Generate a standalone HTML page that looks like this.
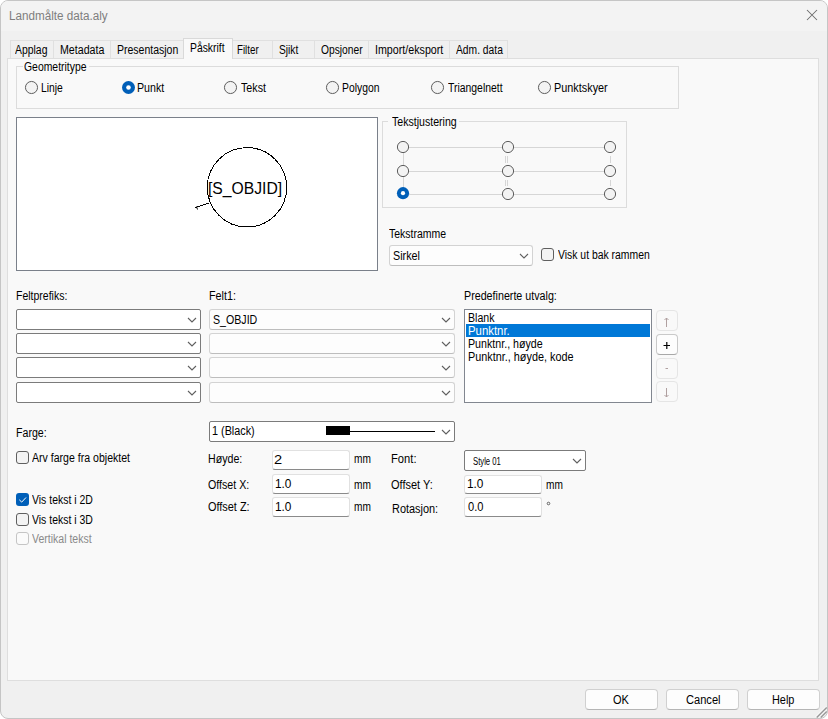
<!DOCTYPE html>
<html><head><meta charset="utf-8"><style>
html,body{margin:0;padding:0;width:828px;height:719px;overflow:hidden;background:#fff}
.ab{position:absolute;box-sizing:content-box}
.tx{position:absolute;white-space:pre;line-height:20px;font-family:"Liberation Sans",sans-serif;transform-origin:0 0;color:#000}
svg{overflow:visible}
</style></head><body>
<div class="ab" style="left:0;top:0;width:826px;height:717px;border:1px solid #c5c5c5;border-radius:8px;background:#f0f0f0;overflow:hidden"><div class="ab" style="left:0;top:0;width:826px;height:30px;background:#f3f3f3"></div></div>
<svg class="ab" style="left:806px;top:9px" width="12" height="12"><path d="M1 1 L11 11 M11 1 L1 11" stroke="#6b6b6b" stroke-width="1.05"/></svg>
<div class="ab" style="left:10px;top:40px;width:42px;height:18px;border:1px solid #e0e0e0;border-bottom:none;background:#f0f0f0"></div>
<div class="ab" style="left:53px;top:40px;width:56px;height:18px;border:1px solid #e0e0e0;border-bottom:none;background:#f0f0f0"></div>
<div class="ab" style="left:110px;top:40px;width:72px;height:18px;border:1px solid #e0e0e0;border-bottom:none;background:#f0f0f0"></div>
<div class="ab" style="left:232px;top:40px;width:39px;height:18px;border:1px solid #e0e0e0;border-bottom:none;background:#f0f0f0"></div>
<div class="ab" style="left:272px;top:40px;width:41px;height:18px;border:1px solid #e0e0e0;border-bottom:none;background:#f0f0f0"></div>
<div class="ab" style="left:314px;top:40px;width:53px;height:18px;border:1px solid #e0e0e0;border-bottom:none;background:#f0f0f0"></div>
<div class="ab" style="left:368px;top:40px;width:80px;height:18px;border:1px solid #e0e0e0;border-bottom:none;background:#f0f0f0"></div>
<div class="ab" style="left:449px;top:40px;width:57px;height:18px;border:1px solid #e0e0e0;border-bottom:none;background:#f0f0f0"></div>
<div class="ab" style="left:7px;top:58px;width:810px;height:621px;border:1px solid #dedede;background:#f9f9f9"></div>
<div class="ab" style="left:183px;top:38px;width:48px;height:20px;border:1px solid #d9d9d9;border-bottom:none;background:#f9f9f9"></div>
<div class="ab" style="left:16px;top:66px;width:661px;height:41px;border:1px solid #dcdcdc"></div>
<div class="ab" style="left:23px;top:60px;width:66px;height:10px;background:#f9f9f9"></div>
<svg class="ab" style="left:24px;top:80px" width="14" height="14"><circle cx="7.5" cy="7.5" r="6.05" fill="#f3f3f3" stroke="#5d5d5d" stroke-width="1"/></svg>
<svg class="ab" style="left:121px;top:80px" width="14" height="14"><circle cx="7.5" cy="7.5" r="6.5" fill="#005fb8"/><circle cx="7.5" cy="7.5" r="2.3" fill="#fff"/></svg>
<svg class="ab" style="left:223px;top:80px" width="14" height="14"><circle cx="7.5" cy="7.5" r="6.05" fill="#f3f3f3" stroke="#5d5d5d" stroke-width="1"/></svg>
<svg class="ab" style="left:325px;top:80px" width="14" height="14"><circle cx="7.5" cy="7.5" r="6.05" fill="#f3f3f3" stroke="#5d5d5d" stroke-width="1"/></svg>
<svg class="ab" style="left:430px;top:80px" width="14" height="14"><circle cx="7.5" cy="7.5" r="6.05" fill="#f3f3f3" stroke="#5d5d5d" stroke-width="1"/></svg>
<svg class="ab" style="left:537px;top:80px" width="14" height="14"><circle cx="7.5" cy="7.5" r="6.05" fill="#f3f3f3" stroke="#5d5d5d" stroke-width="1"/></svg>
<div class="ab" style="left:16px;top:117px;width:360px;height:152px;border:1px solid #7a808a;background:#fff"></div>
<svg class="ab" style="left:0;top:0" width="828" height="300"><circle cx="247" cy="187.3" r="39.7" fill="none" stroke="#000" stroke-width="1" shape-rendering="crispEdges"/><path d="M195.5 207.5 L209 203" stroke="#000" stroke-width="1" fill="none" shape-rendering="crispEdges"/><path d="M196.5 206.5 L197.5 209.5" stroke="#000" stroke-width="1"/></svg>
<div class="tx" style="left:207.5px;top:179px;font-size:16px;line-height:20px;transform:scaleX(0.98)">[S_OBJID]</div>
<div class="ab" style="left:382px;top:121px;width:243px;height:85px;border:1px solid #dcdcdc"></div>
<div class="ab" style="left:388px;top:115px;width:71px;height:10px;background:#f9f9f9"></div>
<svg class="ab" style="left:0;top:0" width="828" height="220"><g stroke="#d6d6d6" stroke-width="1" fill="none"><path d="M403 147.5 H610"/><path d="M403 171.5 H610"/><path d="M403 194.5 H610"/><path d="M403.5 147 V194"/><path d="M505.5 156 V163 M507.5 156 V163 M610.5 156 V163"/><path d="M505.5 180 V186 M507.5 180 V186 M610.5 180 V186"/></g></svg>
<svg class="ab" style="left:396px;top:140px" width="14" height="14"><circle cx="7" cy="7" r="5.6" fill="#f3f3f3" stroke="#5d5d5d" stroke-width="1"/></svg>
<svg class="ab" style="left:501px;top:140px" width="14" height="14"><circle cx="7" cy="7" r="5.6" fill="#f3f3f3" stroke="#5d5d5d" stroke-width="1"/></svg>
<svg class="ab" style="left:603px;top:140px" width="14" height="14"><circle cx="7" cy="7" r="5.6" fill="#f3f3f3" stroke="#5d5d5d" stroke-width="1"/></svg>
<svg class="ab" style="left:396px;top:164px" width="14" height="14"><circle cx="7" cy="7" r="5.6" fill="#f3f3f3" stroke="#5d5d5d" stroke-width="1"/></svg>
<svg class="ab" style="left:501px;top:164px" width="14" height="14"><circle cx="7" cy="7" r="5.6" fill="#f3f3f3" stroke="#5d5d5d" stroke-width="1"/></svg>
<svg class="ab" style="left:603px;top:164px" width="14" height="14"><circle cx="7" cy="7" r="5.6" fill="#f3f3f3" stroke="#5d5d5d" stroke-width="1"/></svg>
<svg class="ab" style="left:396px;top:186px" width="14" height="14"><circle cx="7" cy="7.199999999999989" r="6.1" fill="#005fb8"/><circle cx="7" cy="7.199999999999989" r="2.1" fill="#fff"/></svg>
<svg class="ab" style="left:501px;top:187px" width="14" height="14"><circle cx="7" cy="7" r="5.6" fill="#f3f3f3" stroke="#5d5d5d" stroke-width="1"/></svg>
<svg class="ab" style="left:603px;top:187px" width="14" height="14"><circle cx="7" cy="7" r="5.6" fill="#f3f3f3" stroke="#5d5d5d" stroke-width="1"/></svg>
<div class="ab" style="left:389px;top:245px;width:142px;height:19px;border:1px solid #d3d3d3;border-bottom-color:#bdbdbd;border-radius:3px;background:#fdfdfd"></div><svg class="ab" style="left:519px;top:253px" width="10" height="6"><path d="M1 1 L5 5 L9 1" fill="none" stroke="#5f5f5f" stroke-width="1.1"/></svg>
<svg class="ab" style="left:541px;top:248px" width="14" height="14"><rect x="0.5" y="0.5" width="12" height="12" rx="2.5" fill="#f3f3f3" stroke="#5f5f5f"/></svg>
<div class="ab" style="left:16px;top:309px;width:183px;height:19px;border:1px solid #7b7b7b;border-radius:2px;background:#fff"></div><svg class="ab" style="left:187px;top:317px" width="10" height="6"><path d="M1 1 L5 5 L9 1" fill="none" stroke="#5f5f5f" stroke-width="1.1"/></svg>
<div class="ab" style="left:209px;top:309px;width:244px;height:19px;border:1px solid #d3d3d3;border-bottom-color:#bdbdbd;border-radius:3px;background:#fdfdfd"></div><svg class="ab" style="left:441px;top:317px" width="10" height="6"><path d="M1 1 L5 5 L9 1" fill="none" stroke="#5f5f5f" stroke-width="1.1"/></svg>
<div class="ab" style="left:16px;top:333px;width:183px;height:19px;border:1px solid #7b7b7b;border-radius:2px;background:#fff"></div><svg class="ab" style="left:187px;top:341px" width="10" height="6"><path d="M1 1 L5 5 L9 1" fill="none" stroke="#5f5f5f" stroke-width="1.1"/></svg>
<div class="ab" style="left:209px;top:333px;width:244px;height:19px;border:1px solid #d3d3d3;border-bottom-color:#bdbdbd;border-radius:3px;background:#fdfdfd"></div><svg class="ab" style="left:441px;top:341px" width="10" height="6"><path d="M1 1 L5 5 L9 1" fill="none" stroke="#5f5f5f" stroke-width="1.1"/></svg>
<div class="ab" style="left:16px;top:357px;width:183px;height:19px;border:1px solid #7b7b7b;border-radius:2px;background:#fff"></div><svg class="ab" style="left:187px;top:365px" width="10" height="6"><path d="M1 1 L5 5 L9 1" fill="none" stroke="#5f5f5f" stroke-width="1.1"/></svg>
<div class="ab" style="left:209px;top:357px;width:244px;height:19px;border:1px solid #d3d3d3;border-bottom-color:#bdbdbd;border-radius:3px;background:#fdfdfd"></div><svg class="ab" style="left:441px;top:365px" width="10" height="6"><path d="M1 1 L5 5 L9 1" fill="none" stroke="#5f5f5f" stroke-width="1.1"/></svg>
<div class="ab" style="left:16px;top:382px;width:183px;height:19px;border:1px solid #7b7b7b;border-radius:2px;background:#fff"></div><svg class="ab" style="left:187px;top:390px" width="10" height="6"><path d="M1 1 L5 5 L9 1" fill="none" stroke="#5f5f5f" stroke-width="1.1"/></svg>
<div class="ab" style="left:209px;top:382px;width:244px;height:19px;border:1px solid #d3d3d3;border-bottom-color:#bdbdbd;border-radius:3px;background:#fdfdfd"></div><svg class="ab" style="left:441px;top:390px" width="10" height="6"><path d="M1 1 L5 5 L9 1" fill="none" stroke="#5f5f5f" stroke-width="1.1"/></svg>
<div class="ab" style="left:464px;top:309px;width:186px;height:92px;border:1px solid #828790;background:#fff"></div>
<div class="ab" style="left:466px;top:324px;width:184px;height:13px;background:#0078d7"></div>
<div class="ab" style="left:656px;top:310px;width:20px;height:19px;border:1px solid #e5e5e5;border-bottom-color:#e5e5e5;border-radius:4px;background:#f9f9f9"></div>
<div class="ab" style="left:656px;top:334px;width:20px;height:19px;border:1px solid #c9c9c9;border-bottom-color:#a8a8a8;border-radius:4px;background:#fdfdfd"></div>
<div class="ab" style="left:656px;top:358px;width:20px;height:19px;border:1px solid #e5e5e5;border-bottom-color:#e5e5e5;border-radius:4px;background:#f9f9f9"></div>
<div class="ab" style="left:656px;top:381px;width:20px;height:19px;border:1px solid #e5e5e5;border-bottom-color:#e5e5e5;border-radius:4px;background:#f9f9f9"></div>
<svg class="ab" style="left:656px;top:300px" width="22" height="110"><g stroke="#b0a0a0" stroke-width="1" fill="none"><path d="M10.5 18 V27 M8.5 20 L10.5 18 L12.5 20"/><path d="M10.5 88 V97 M8.5 95 L10.5 97 L12.5 95"/><path d="M9.5 68.5 H12"/></g><path d="M7.5 45.5 H14 M10.8 42 V49" stroke="#000" stroke-width="1.2"/></svg>
<div class="ab" style="left:209px;top:421px;width:244px;height:19px;border:1px solid #7b7b7b;border-radius:2px;background:#fff"></div><svg class="ab" style="left:441px;top:429px" width="10" height="6"><path d="M1 1 L5 5 L9 1" fill="none" stroke="#5f5f5f" stroke-width="1.1"/></svg>
<div class="ab" style="left:326px;top:426px;width:24px;height:9px;background:#000"></div>
<div class="ab" style="left:350px;top:430.5px;width:85px;height:1.5px;background:#000"></div>
<svg class="ab" style="left:16px;top:451px" width="14" height="14"><rect x="0.5" y="0.5" width="12" height="12" rx="2.5" fill="#f3f3f3" stroke="#5f5f5f"/></svg>
<svg class="ab" style="left:16px;top:493px" width="14" height="14"><rect x="0" y="0" width="13" height="13" rx="3" fill="#005fb8"/><path d="M3.3 6.8 L5.7 9.1 L10 4.5" fill="none" stroke="#fff" stroke-width="1"/></svg>
<svg class="ab" style="left:16px;top:513px" width="14" height="14"><rect x="0.5" y="0.5" width="12" height="12" rx="2.5" fill="#f3f3f3" stroke="#5f5f5f"/></svg>
<svg class="ab" style="left:16px;top:532px" width="14" height="14"><rect x="0.5" y="0.5" width="12" height="12" rx="2.5" fill="#fbfbfb" stroke="#c5c5c5"/></svg>
<div class="ab" style="left:272px;top:450px;width:76px;height:18px;border:1px solid #e1e1e1;border-bottom:1px solid #8a8a8a;border-radius:3px;background:#fff"></div>
<div class="ab" style="left:272px;top:474px;width:76px;height:18px;border:1px solid #e1e1e1;border-bottom:1px solid #8a8a8a;border-radius:3px;background:#fff"></div>
<div class="ab" style="left:272px;top:497px;width:76px;height:18px;border:1px solid #e1e1e1;border-bottom:1px solid #8a8a8a;border-radius:3px;background:#fff"></div>
<div class="ab" style="left:464px;top:475px;width:76px;height:17px;border:1px solid #e1e1e1;border-bottom:1px solid #8a8a8a;border-radius:3px;background:#fff"></div>
<div class="ab" style="left:464px;top:497px;width:76px;height:18px;border:1px solid #e1e1e1;border-bottom:1px solid #8a8a8a;border-radius:3px;background:#fff"></div>
<div class="ab" style="left:464px;top:450px;width:120px;height:19px;border:1px solid #7b7b7b;border-radius:2px;background:#fff"></div><svg class="ab" style="left:572px;top:458px" width="10" height="6"><path d="M1 1 L5 5 L9 1" fill="none" stroke="#5f5f5f" stroke-width="1.1"/></svg>
<svg class="ab" style="left:546px;top:500.5px" width="6" height="6"><circle cx="2.5" cy="2.5" r="1.3" fill="none" stroke="#555" stroke-width="0.9"/></svg>
<div class="ab" style="left:585px;top:689px;width:71px;height:19px;border:1px solid #d0d0d0;border-bottom-color:#b5b5b5;border-radius:4px;background:#fdfdfd"></div>
<div class="ab" style="left:666px;top:689px;width:71px;height:19px;border:1px solid #d0d0d0;border-bottom-color:#b5b5b5;border-radius:4px;background:#fdfdfd"></div>
<div class="ab" style="left:747px;top:689px;width:71px;height:19px;border:1px solid #d0d0d0;border-bottom-color:#b5b5b5;border-radius:4px;background:#fdfdfd"></div>
<svg class="ab" style="left:812px;top:703px" width="16" height="16"><g stroke="#ffffff" stroke-width="1"><path d="M3.5 14 L14 3.5 M7.5 14 L14 7.5"/></g><g stroke="#999" stroke-width="1.4"><path d="M4.7 14.5 L14.7 4.5 M8.7 14.5 L14.7 8.5"/></g></svg>
<div class="tx" style="left:8.73px;top:6.00px;font-size:12px;color:#7e7e7e;transform:scaleX(0.9733)">Landmålte data.aly</div>
<div class="tx" style="left:15.20px;top:39.70px;font-size:12px;color:#000;transform:scaleX(0.8676)">Applag</div>
<div class="tx" style="left:59.61px;top:39.70px;font-size:12px;color:#000;transform:scaleX(0.8878)">Metadata</div>
<div class="tx" style="left:117.03px;top:39.70px;font-size:12px;color:#000;transform:scaleX(0.8750)">Presentasjon</div>
<div class="tx" style="left:190.04px;top:37.80px;font-size:12px;color:#000;transform:scaleX(0.8641)">Påskrift</div>
<div class="tx" style="left:237.39px;top:39.70px;font-size:12px;color:#000;transform:scaleX(0.8115)">Filter</div>
<div class="tx" style="left:279.35px;top:39.70px;font-size:12px;color:#000;transform:scaleX(0.8500)">Sjikt</div>
<div class="tx" style="left:320.90px;top:39.70px;font-size:12px;color:#000;transform:scaleX(0.8531)">Opsjoner</div>
<div class="tx" style="left:374.91px;top:39.70px;font-size:12px;color:#000;transform:scaleX(0.8908)">Import/eksport</div>
<div class="tx" style="left:456.10px;top:39.70px;font-size:12px;color:#000;transform:scaleX(0.8564)">Adm. data</div>
<div class="tx" style="left:23.83px;top:57.00px;font-size:12px;color:#000;transform:scaleX(0.8676)">Geometritype</div>
<div class="tx" style="left:40.94px;top:78.00px;font-size:12px;color:#000;transform:scaleX(0.8625)">Linje</div>
<div class="tx" style="left:137.31px;top:78.00px;font-size:12px;color:#000;transform:scaleX(0.8867)">Punkt</div>
<div class="tx" style="left:240.90px;top:78.00px;font-size:12px;color:#000;transform:scaleX(0.8929)">Tekst</div>
<div class="tx" style="left:341.74px;top:78.00px;font-size:12px;color:#000;transform:scaleX(0.8643)">Polygon</div>
<div class="tx" style="left:447.70px;top:78.00px;font-size:12px;color:#000;transform:scaleX(0.8667)">Triangelnett</div>
<div class="tx" style="left:553.59px;top:78.00px;font-size:12px;color:#000;transform:scaleX(0.9052)">Punktskyer</div>
<div class="tx" style="left:391.80px;top:112.00px;font-size:12px;color:#000;transform:scaleX(0.8822)">Tekstjustering</div>
<div class="tx" style="left:389.10px;top:223.60px;font-size:12px;color:#000;transform:scaleX(0.8738)">Tekstramme</div>
<div class="tx" style="left:392.90px;top:245.60px;font-size:12px;color:#000;transform:scaleX(0.8964)">Sirkel</div>
<div class="tx" style="left:557.80px;top:245.20px;font-size:12px;color:#000;transform:scaleX(0.8667)">Visk ut bak rammen</div>
<div class="tx" style="left:15.62px;top:286.00px;font-size:12px;color:#000;transform:scaleX(0.8754)">Feltprefiks:</div>
<div class="tx" style="left:209.00px;top:286.00px;font-size:12px;color:#000;transform:scaleX(0.8964)">Felt1:</div>
<div class="tx" style="left:463.61px;top:286.00px;font-size:12px;color:#000;transform:scaleX(0.8922)">Predefinerte utvalg:</div>
<div class="tx" style="left:213.11px;top:309.80px;font-size:12px;color:#000;transform:scaleX(0.8857)">S_OBJID</div>
<div class="tx" style="left:468.12px;top:308.00px;font-size:12px;color:#000;transform:scaleX(0.8828)">Blank</div>
<div class="tx" style="left:468.05px;top:321.00px;font-size:12px;color:#fff;transform:scaleX(0.9476)">Punktnr.</div>
<div class="tx" style="left:468.11px;top:334.00px;font-size:12px;color:#000;transform:scaleX(0.8892)">Punktnr., høyde</div>
<div class="tx" style="left:468.10px;top:347.00px;font-size:12px;color:#000;transform:scaleX(0.9035)">Punktnr., høyde, kode</div>
<div class="tx" style="left:15.62px;top:423.40px;font-size:12px;color:#000;transform:scaleX(0.8848)">Farge:</div>
<div class="tx" style="left:32.20px;top:448.00px;font-size:12px;color:#000;transform:scaleX(0.8802)">Arv farge fra objektet</div>
<div class="tx" style="left:32.20px;top:489.80px;font-size:12px;color:#000;transform:scaleX(0.8729)">Vis tekst i 2D</div>
<div class="tx" style="left:32.20px;top:510.10px;font-size:12px;color:#000;transform:scaleX(0.8729)">Vis tekst i 3D</div>
<div class="tx" style="left:32.20px;top:529.10px;font-size:12px;color:#8a8a8a;transform:scaleX(0.8765)">Vertikal tekst</div>
<div class="tx" style="left:211.90px;top:421.10px;font-size:12px;color:#000;transform:scaleX(0.9022)">1 (Black)</div>
<div class="tx" style="left:207.81px;top:449.00px;font-size:12px;color:#000;transform:scaleX(0.8865)">Høyde:</div>
<div class="tx" style="left:207.80px;top:474.50px;font-size:12px;color:#000;transform:scaleX(0.8891)">Offset X:</div>
<div class="tx" style="left:207.80px;top:497.00px;font-size:12px;color:#000;transform:scaleX(0.9089)">Offset Z:</div>
<div class="tx" style="left:274.48px;top:449.80px;font-size:12px;color:#000;transform:scaleX(1.2200)">2</div>
<div class="tx" style="left:275.01px;top:474.00px;font-size:12px;color:#000;transform:scaleX(0.9867)">1.0</div>
<div class="tx" style="left:275.01px;top:497.00px;font-size:12px;color:#000;transform:scaleX(0.9867)">1.0</div>
<div class="tx" style="left:354.06px;top:449.00px;font-size:12px;color:#000;transform:scaleX(0.8444)">mm</div>
<div class="tx" style="left:354.06px;top:475.00px;font-size:12px;color:#000;transform:scaleX(0.8444)">mm</div>
<div class="tx" style="left:354.06px;top:496.50px;font-size:12px;color:#000;transform:scaleX(0.8444)">mm</div>
<div class="tx" style="left:391.17px;top:449.00px;font-size:12px;color:#000;transform:scaleX(0.9320)">Font:</div>
<div class="tx" style="left:390.60px;top:474.70px;font-size:12px;color:#000;transform:scaleX(0.9156)">Offset Y:</div>
<div class="tx" style="left:391.59px;top:499.10px;font-size:12px;color:#000;transform:scaleX(0.9102)">Rotasjon:</div>
<div class="tx" style="left:472.83px;top:451.80px;font-size:10px;color:#000;transform:scaleX(0.7714)">Style 01</div>
<div class="tx" style="left:466.51px;top:474.00px;font-size:12px;color:#000;transform:scaleX(0.9867)">1.0</div>
<div class="tx" style="left:467.50px;top:497.00px;font-size:12px;color:#000;transform:scaleX(0.9250)">0.0</div>
<div class="tx" style="left:545.96px;top:475.00px;font-size:12px;color:#000;transform:scaleX(0.8444)">mm</div>
<div class="tx" style="left:613.40px;top:689.60px;font-size:12px;color:#000;transform:scaleX(0.9176)">OK</div>
<div class="tx" style="left:685.58px;top:689.60px;font-size:12px;color:#000;transform:scaleX(0.9250)">Cancel</div>
<div class="tx" style="left:772.29px;top:689.70px;font-size:12px;color:#000;transform:scaleX(0.9087)">Help</div>
</body></html>
